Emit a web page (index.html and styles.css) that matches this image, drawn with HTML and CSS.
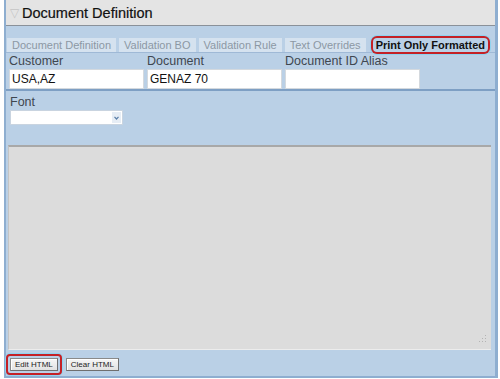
FILE: index.html
```html
<!DOCTYPE html>
<html lang="en">
<head>
    <meta charset="UTF-8">
    <title>Document Definition</title>
    <link rel="stylesheet" href="styles.css">
</head>
<body>
    <div class="panel">
        <!-- Judul panel -->
        <div class="header">
            <span class="arrow">&#9661;</span>Document Definition
        </div>

        <!-- Tab -->
        <div class="tabs">
            <span class="tab">Document Definition</span>
            <span class="tab">Validation BO</span>
            <span class="tab">Validation Rule</span>
            <span class="tab">Text Overrides</span>
            <span class="tab active">Print Only Formatted</span>
        </div>

        <div class="fields">
            <div class="field">
                <label>Customer</label>
                <div class="input">USA,AZ</div>
            </div>
            <div class="field">
                <label>Document</label>
                <div class="input">GENAZ 70</div>
            </div>
            <div class="field">
                <label>Document ID Alias</label>
                <div class="input"></div>
            </div>
        </div>

        <div class="font-row">
            <label>Font</label>
            <div class="select">
                <span class="caret">
                    <svg width="5" height="4" viewBox="0 0 5 4"><path d="M0.5 0.8 L2.5 3 L4.5 0.8" fill="none" stroke="#5b7fa8" stroke-width="1.2"/></svg>
                </span>
            </div>
        </div>

        <!-- Area HTML -->
        <div class="editor">
            <svg class="grip" width="8" height="8" viewBox="0 0 8 8">
                <rect x="6" y="0" width="1" height="1" fill="#b4b4b4"/>
                <rect x="3" y="3" width="1" height="1" fill="#b4b4b4"/>
                <rect x="6" y="3" width="1" height="1" fill="#b4b4b4"/>
                <rect x="0" y="6" width="1" height="1" fill="#b4b4b4"/>
                <rect x="3" y="6" width="1" height="1" fill="#b4b4b4"/>
                <rect x="6" y="6" width="1" height="1" fill="#b4b4b4"/>
            </svg>
        </div>

        <div class="buttons">
            <span class="mark"><span class="btn">Edit HTML</span></span>
            <span class="btn">Clear HTML</span>
        </div>
    </div>
</body>
</html>
```

FILE: styles.css
```css
body {
    margin: 0;
    background: #ffffff;
    font-family: "Liberation Sans", Arial, sans-serif;
}
.panel {
    margin-left: 4px;
    width: 489px;
    height: 376px;
    background: #bad0e6;
    border-left: 2px solid #8eaed0;
    border-right: 3px solid #8eaed0;
    border-bottom: 2px solid #8eaed0;
    display: flex;
    flex-direction: column;
}
.header {
    height: 25px;
    flex-shrink: 0;
    background: #e4e4e4;
    border-bottom: 1px solid #8a9199;
    font-size: 14.5px;
    line-height: 26px;
    color: #111;
    padding-left: 4px;
    -webkit-text-stroke: 0.2px #111;
}
.arrow {
    color: #c4c4c4;
    font-size: 12px;
    margin-right: 3px;
    vertical-align: 1px;
    -webkit-text-stroke: 0;
}
.tabs {
    display: flex;
    gap: 3px;
    padding: 12px 0 0 1px;
    height: 14px;
    flex-shrink: 0;
    border-bottom: 1px solid #9fb9d6;
}
.tab {
    background: #d5e2ef;
    color: #8c98a4;
    font-size: 11px;
    line-height: 14px;
    padding: 0 5px;
}
.tab.active {
    background: none;
    color: #111;
    font-weight: bold;
    padding: 0 3px;
    margin-left: 4px;
    border-radius: 4px;
    box-shadow: 0 0 0 2px #c42026, 0 0 0 3px #8fd3f0;
}
.fields {
    display: flex;
    gap: 3px;
    padding-left: 3px;
    height: 36px;
    flex-shrink: 0;
    border-bottom: 2px solid #7e9fc4;
}
.field label, .font-row label {
    display: block;
    font-size: 12.5px;
    color: #3f4750;
    line-height: 16px;
    height: 16px;
    margin-left: 0;
}
.input {
    width: 131px;
    height: 18px;
    background: #ffffff;
    border: 1px solid #d4d9de;
    font-size: 12px;
    line-height: 19px;
    padding-left: 2px;
    color: #111;
}
.font-row {
    padding: 3px 0 0 4px;
    height: 51px;
    flex-shrink: 0;
}
.select {
    width: 111px;
    height: 13px;
    background: #ffffff;
    border: 1px solid #c9d4e0;
    position: relative;
}
.caret {
    position: absolute;
    right: 1px;
    top: 1px;
    width: 9px;
    height: 11px;
    background: #e6edf5;
    display: flex;
    align-items: center;
    justify-content: center;
}
.editor {
    margin-left: 2px;
    width: 482px;
    height: 202px;
    flex-shrink: 0;
    background: #dcdcdc;
    border-top: 2px solid #a8a8a8;
    border-left: 1px solid #c4c4c4;
    border-bottom: 1px solid #ececec;
    position: relative;
}
.grip {
    position: absolute;
    right: 4px;
    bottom: 6px;
}
.buttons {
    display: flex;
    align-items: center;
    gap: 4px;
    padding: 4px 0 0 0;
}
.mark {
    display: flex;
    padding: 2px;
    border: 2px solid #c42026;
    border-radius: 4px;
    box-shadow: 0 0 0 1px #8fd3f0;
}
.btn {
    font-size: 8px;
    line-height: 11px;
    padding: 0 4px;
    background: linear-gradient(#f6f6f6, #e2e2e2);
    color: #222;
    border: 1px solid #8a8a8a;
    border-right-color: #6f6f6f;
    border-bottom-color: #6f6f6f;
    box-shadow: inset 1px 1px 0 #ffffff;
}
```
